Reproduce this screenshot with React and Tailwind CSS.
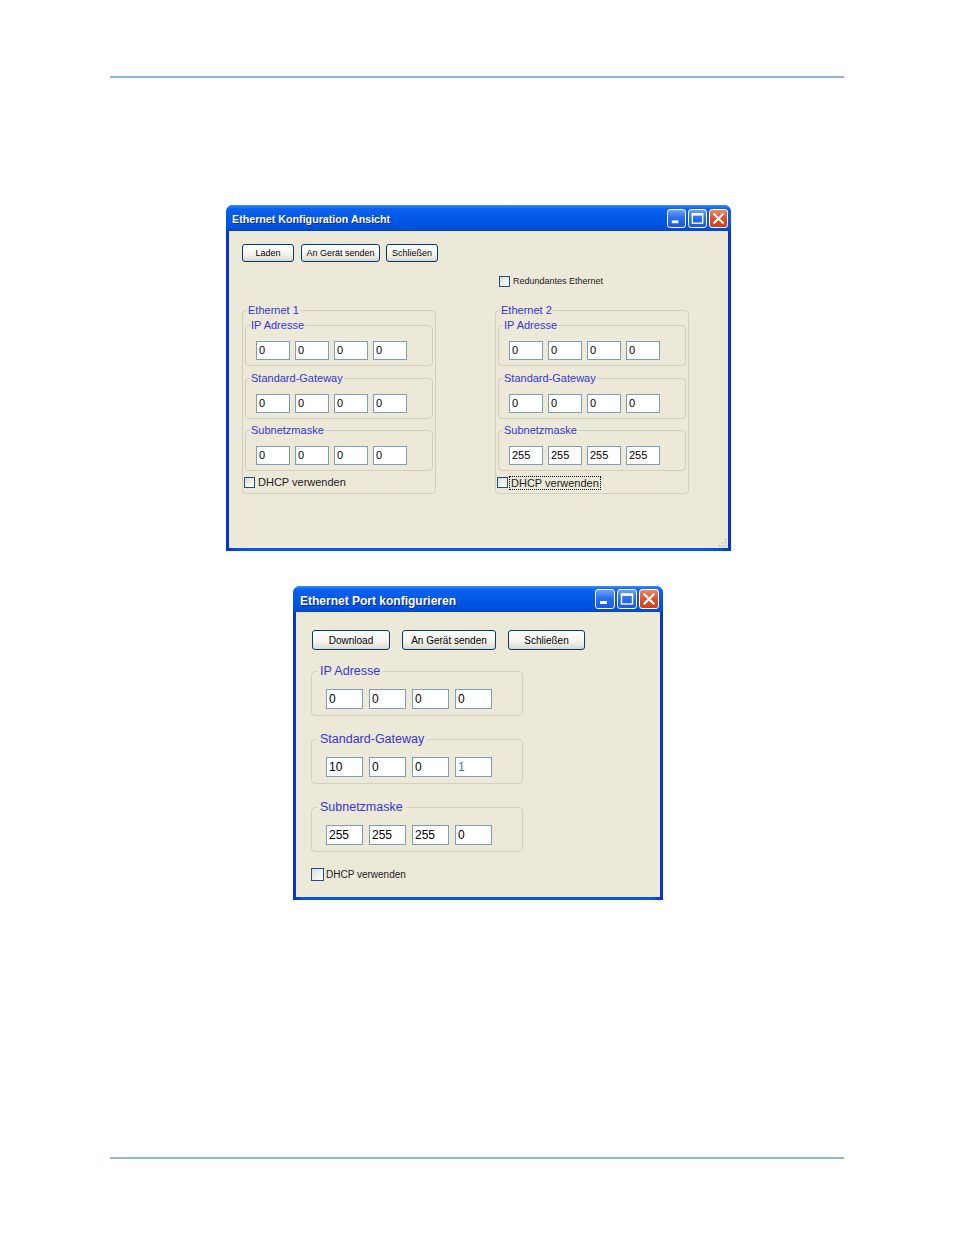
import React from "react";

const FONT = { fontFamily: '"Liberation Sans", Arial, sans-serif' };

function TitleButton({ kind, size }) {
  const base =
    kind === "close"
      ? "bg-[linear-gradient(180deg,#f08b66_0%,#e0552f_45%,#c9401e_100%)]"
      : "bg-[linear-gradient(180deg,#6fa2f8_0%,#2c6ff0_45%,#1d58de_100%)]";
  return (
    <div
      className={`${base} border border-white rounded-[3px] flex items-center justify-center`}
      style={{ width: size, height: size }}
    >
      {kind === "min" && (
        <svg width={size - 2} height={size - 2} viewBox="0 0 18 18">
          <rect x="4" y="11" width="7" height="3" fill="#fff" />
        </svg>
      )}
      {kind === "max" && (
        <svg width={size - 2} height={size - 2} viewBox="0 0 18 18">
          <rect x="3.5" y="4" width="11" height="10" fill="none" stroke="#fff" strokeWidth="1.4" />
          <rect x="3" y="3.5" width="12" height="2.4" fill="#fff" />
        </svg>
      )}
      {kind === "close" && (
        <svg width={size - 2} height={size - 2} viewBox="0 0 18 18">
          <path d="M4.5 4.5 L13.5 13.5 M13.5 4.5 L4.5 13.5" stroke="#fff" strokeWidth="2.2" strokeLinecap="square" />
        </svg>
      )}
    </div>
  );
}

function XpWindow({ title, width, height, left, titleClass, btnSize, padTitle, children }) {
  return (
    <div
      className="flex flex-col rounded-t-[7px] bg-[linear-gradient(90deg,#0831c8_0%,#0556e8_3%,#0556e8_97%,#0831c8_100%)] overflow-hidden"
      style={{ width, height, marginLeft: left }}
    >
      <div
        className={`h-[26px] flex items-center justify-between ${padTitle} bg-[linear-gradient(180deg,#3a8ef8_0%,#0a62ef_14%,#0458e6_50%,#0052de_86%,#0346c6_100%)]`}
      >
        <span className={`text-white font-bold ${titleClass} [text-shadow:1px_1px_#0b2a8a]`}>{title}</span>
        <div className="flex gap-[2px]">
          <TitleButton kind="min" size={btnSize} />
          <TitleButton kind="max" size={btnSize} />
          <TitleButton kind="close" size={btnSize} />
        </div>
      </div>
      <div className="relative flex-1 mx-[3px] mb-[3px] bg-[#ece9d8]">{children}</div>
    </div>
  );
}

function XpButton({ label, w, h, text }) {
  return (
    <div
      className={`flex items-center justify-center border border-[#003c74] rounded-[3px] bg-[linear-gradient(180deg,#ffffff_0%,#f5f4ef_55%,#e3e0d5_90%,#d6d0c5_100%)] text-black ${text}`}
      style={{ width: w, height: h }}
    >
      {label}
    </div>
  );
}

function CheckBox({ size }) {
  return (
    <div
      className="border border-[#1c5180] bg-[linear-gradient(135deg,#dcdcd7_0%,#f2f2ee_60%,#ffffff_100%)] shrink-0"
      style={{ width: size, height: size }}
    />
  );
}

function IpField({ value, w, h, text, blue }) {
  return (
    <div
      className={`border border-[#7f9db9] bg-white flex items-center pl-[2px] ${text} ${blue ? "text-[#1c7ad8]" : "text-black"}`}
      style={{ width: w, height: h }}
    >
      {value}
    </div>
  );
}

// small window: fonts & sizes a bit smaller
function SmallGroup({ label, values, gap }) {
  return (
    <fieldset className={`border border-[#d0d0bf] rounded-[4px] mx-[2px] ${gap}`}>
      <legend className="ml-[4px] px-[1px] text-[11px] leading-[12px] text-[#3535d8]">{label}</legend>
      <div className="flex gap-[5px] pt-[10px] pl-[10px] pb-[5px]">
        {values.map((v, i) => (
          <IpField key={i} value={v} w={34} h={19} text="text-[11px]" />
        ))}
      </div>
    </fieldset>
  );
}

function EthernetGroup({ label, ip, gw, mask, focused }) {
  return (
    <fieldset className="border border-[#d0d0bf] rounded-[4px] w-[194px]">
      <legend className="ml-[4px] px-[1px] text-[11px] leading-[12px] text-[#3535d8]">{label}</legend>
      <div className="pt-[3px] pb-[4px]">
        <SmallGroup label="IP Adresse" values={ip} gap="" />
        <SmallGroup label="Standard-Gateway" values={gw} gap="mt-[6px]" />
        <SmallGroup label="Subnetzmaske" values={mask} gap="mt-[5px]" />
        <div className="mt-[5px] h-[13px] flex items-center ml-[1px]">
          <CheckBox size={11} />
          {focused ? (
            <span className="ml-[1px] border border-dotted border-black text-[11px] leading-[12px] px-[1px] text-[#222]">
              DHCP verwenden
            </span>
          ) : (
            <span className="ml-[3px] text-[11px] leading-[13px] text-[#222]">DHCP verwenden</span>
          )}
        </div>
      </div>
    </fieldset>
  );
}

function BigGroup({ label, values, first }) {
  return (
    <fieldset className={`border border-[#d0d0bf] rounded-[4px] w-[212px] ${first ? "mt-[14px]" : "mt-[16px]"}`}>
      <legend className="ml-[5px] px-[3px] text-[12.5px] leading-[14px] text-[#3535d8]">{label}</legend>
      <div className="flex gap-[6px] pt-[11px] pl-[14px] pb-[6px]">
        {values.map((v, i) => (
          <IpField key={i} value={v} w={37} h={20} text="text-[12px]" blue={label === "Standard-Gateway" && i === 3} />
        ))}
      </div>
    </fieldset>
  );
}

export default function App() {
  const zeros = ["0", "0", "0", "0"];
  return (
    <div className="w-[954px] h-[1235px] bg-white flex flex-col" style={FONT}>
      <div className="mt-[76px] mx-auto w-[734px] h-[2px] bg-[#95b3d7]" />

      {/* Ethernet Konfiguration Ansicht */}
      <div className="mt-[127px]">
        <XpWindow
          title="Ethernet Konfiguration Ansicht"
          width={505}
          height={346}
          left={226}
          titleClass="text-[10.7px] pt-[2px]"
          btnSize={19}
          padTitle="pl-[6px] pr-[3px]"
        >
          <div className="pt-[13px] pl-[13px]">
            <div className="flex">
              <XpButton label="Laden" w={52} h={18} text="text-[9px] pt-[1px]" />
              <div className="ml-[7px]">
                <XpButton label="An Gerät senden" w={79} h={18} text="text-[9px] pt-[1px]" />
              </div>
              <div className="ml-[6px]">
                <XpButton label="Schließen" w={52} h={18} text="text-[9px] pt-[1px]" />
              </div>
            </div>
            <div className="grid grid-cols-[194px_194px] gap-x-[59px]">
              <div />
              <div className="mt-[14px] h-[11px] flex items-center pl-[4px]">
                <CheckBox size={11} />
                <span className="ml-[3px] text-[9px] text-[#222]">Redundantes Ethernet</span>
              </div>
              <div className="mt-[17px]">
                <EthernetGroup label="Ethernet 1" ip={zeros} gw={zeros} mask={zeros} />
              </div>
              <div className="mt-[17px]">
                <EthernetGroup
                  label="Ethernet 2"
                  ip={zeros}
                  gw={zeros}
                  mask={["255", "255", "255", "255"]}
                  focused
                />
              </div>
            </div>
          </div>
          <svg className="absolute right-[1px] bottom-[1px]" width="8" height="8" viewBox="0 0 8 8">
            <rect x="6" y="0" width="1.5" height="1.5" fill="#c2bfae" />
            <rect x="3" y="3" width="1.5" height="1.5" fill="#c2bfae" />
            <rect x="6" y="3" width="1.5" height="1.5" fill="#c2bfae" />
            <rect x="0" y="6" width="1.5" height="1.5" fill="#c2bfae" />
            <rect x="3" y="6" width="1.5" height="1.5" fill="#c2bfae" />
            <rect x="6" y="6" width="1.5" height="1.5" fill="#c2bfae" />
          </svg>
        </XpWindow>
      </div>

      {/* Ethernet Port konfigurieren */}
      <div className="mt-[35px]">
        <XpWindow
          title="Ethernet Port konfigurieren"
          width={370}
          height={314}
          left={293}
          titleClass="text-[12px] pt-[3px]"
          btnSize={20}
          padTitle="pl-[7px] pr-[4px]"
        >
          <div className="pt-[18px] pl-[15px]">
            <div className="flex ml-[1px] gap-[12px]">
              <XpButton label="Download" w={78} h={20} text="text-[10px]" />
              <XpButton label="An Gerät senden" w={94} h={20} text="text-[10px]" />
              <XpButton label="Schließen" w={77} h={20} text="text-[10px]" />
            </div>
            <BigGroup label="IP Adresse" values={zeros} first />
            <BigGroup label="Standard-Gateway" values={["10", "0", "0", "1"]} />
            <BigGroup label="Subnetzmaske" values={["255", "255", "255", "0"]} />
            <div className="mt-[16px] h-[13px] flex items-center">
              <CheckBox size={13} />
              <span className="ml-[2px] text-[10px] text-[#222]">DHCP verwenden</span>
            </div>
          </div>
        </XpWindow>
      </div>

      <div className="mt-[257px] mx-auto w-[734px] h-[2px] bg-[#95b3d7]" />
    </div>
  );
}
